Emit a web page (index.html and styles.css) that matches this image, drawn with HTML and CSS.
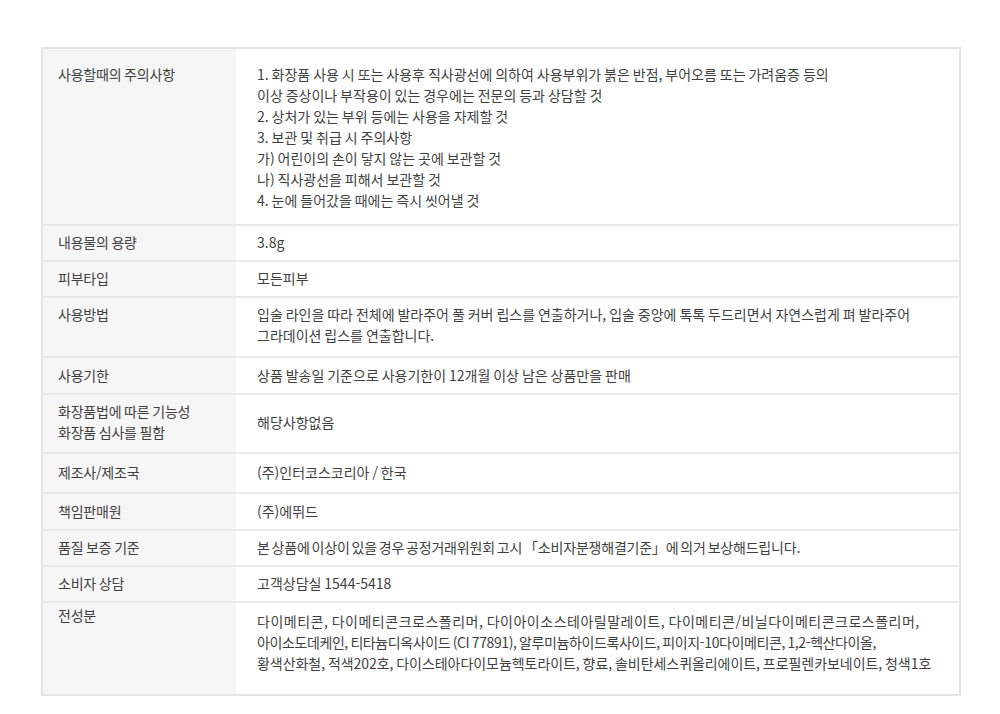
FILE: index.html
```html
<!DOCTYPE html>
<html lang="ko">
<head>
<meta charset="utf-8">
<title>상품정보</title>
<link rel="stylesheet" href="styles.css">
</head>
<body>
<div class="wrap">
<table class="spec">
<colgroup><col class="c-label"><col class="c-value"></colgroup>
<tr class="r-first">
<th>사용할때의 주의사항</th>
<td>1. 화장품 사용 시 또는 사용후 직사광선에 의하여 사용부위가 붉은 반점, 부어오름 또는 가려움증 등의<br>이상 증상이나 부작용이 있는 경우에는 전문의 등과 상담할 것<br>2. 상처가 있는 부위 등에는 사용을 자제할 것<br>3. 보관 및 취급 시 주의사항<br>가) 어린이의 손이 닿지 않는 곳에 보관할 것<br>나) 직사광선을 피해서 보관할 것<br>4. 눈에 들어갔을 때에는 즉시 씻어낼 것</td>
</tr>
<tr><th>내용물의 용량</th><td>3.8g</td></tr>
<tr><th>피부타입</th><td>모든피부</td></tr>
<tr class="r-two">
<th>사용방법</th>
<td>입술 라인을 따라 전체에 발라주어 풀 커버 립스를 연출하거나, 입술 중앙에 톡톡 두드리면서 자연스럽게 펴 발라주어<br>그라데이션 립스를 연출합니다.</td>
</tr>
<tr class="r-mid"><th>사용기한</th><td>상품 발송일 기준으로 사용기한이 12개월 이상 남은 상품만을 판매</td></tr>
<tr class="r-label2">
<th>화장품법에 따른 기능성<br>화장품 심사를 필함</th>
<td>해당사항없음</td>
</tr>
<tr class="r-tall"><th>제조사/제조국</th><td>(주)인터코스코리아 / 한국</td></tr>
<tr class="r-mid"><th>책임판매원</th><td>(주)에뛰드</td></tr>
<tr><th>품질 보증 기준</th><td class="quality">본 상품에 이상이 있을 경우 공정거래위원회 고시 「소비자분쟁해결기준」에 의거 보상해드립니다.</td></tr>
<tr><th>소비자 상담</th><td>고객상담실 1544-5418</td></tr>
<tr class="r-last">
<th>전성분</th>
<td><span class="ln1">다이메티콘, 다이메티콘크로스폴리머, 다이아이소스테아릴말레이트, 다이메티콘/비닐다이메티콘크로스폴리머,</span><br><span class="ln2">아이소도데케인, 티타늄디옥사이드 (CI 77891), 알루미늄하이드록사이드, 피이지-10다이메티콘, 1,2-헥산다이올,</span><br><span class="ln3">황색산화철, 적색202호, 다이스테아다이모늄헥토라이트, 향료, 솔비탄세스퀴올리에이트, 프로필렌카보네이트, 청색1호</span></td>
</tr>
</table>
</div>
</body>
</html>
```

FILE: styles.css
```css
html, body {
  margin: 0;
  padding: 0;
  background: #ffffff;
}

.wrap {
  padding: 47px 0 0 41px;
}

.spec {
  width: 920px;
  table-layout: fixed;
  border-collapse: collapse;
  border: 2px solid #e4e4e4;
  font-family: "Noto Sans CJK KR", "Noto Sans", sans-serif;
  font-size: 14px;
  line-height: 21px;
  letter-spacing: 0;
  word-spacing: -1px;
  color: #3f3f3f;
}

.c-label {
  width: 194px;
}

.spec th,
.spec td {
  padding: 6px 20px 7px 21px;
  vertical-align: middle;
  white-space: nowrap;
  text-align: left;
  font-weight: normal;
}

.spec th {
  padding-left: 15px;
  padding-right: 10px;
  background: #f6f6f6;
  color: #3f3f3f;
  letter-spacing: -0.2px;
}

.spec tr + tr > th,
.spec tr + tr > td {
  border-top: 2px solid #e8e8e8;
}

.spec td.quality {
  letter-spacing: -0.2px;
  word-spacing: -1.8px;
}

.ln1 {
  letter-spacing: 0.5px;
}

.ln2 {
  letter-spacing: -0.4px;
}

.ln3 {
  letter-spacing: -0.05px;
}

.r-first > th,
.r-first > td {
  vertical-align: top;
  padding-top: 15px;
  padding-bottom: 13px;
}

.r-two > th,
.r-two > td {
  vertical-align: top;
  padding-top: 6px;
  padding-bottom: 10px;
}

.r-mid > th,
.r-mid > td {
  padding-top: 7px;
  padding-bottom: 7px;
}

.r-label2 > th,
.r-label2 > td {
  padding-top: 6px;
  padding-bottom: 9px;
}

.r-tall > th,
.r-tall > td {
  padding-top: 8px;
  padding-bottom: 9px;
}

.r-last > th,
.r-last > td {
  vertical-align: top;
}

.r-last > th {
  padding-top: 2px;
}

.r-last > td {
  padding-top: 8px;
  padding-bottom: 20px;
}
```
